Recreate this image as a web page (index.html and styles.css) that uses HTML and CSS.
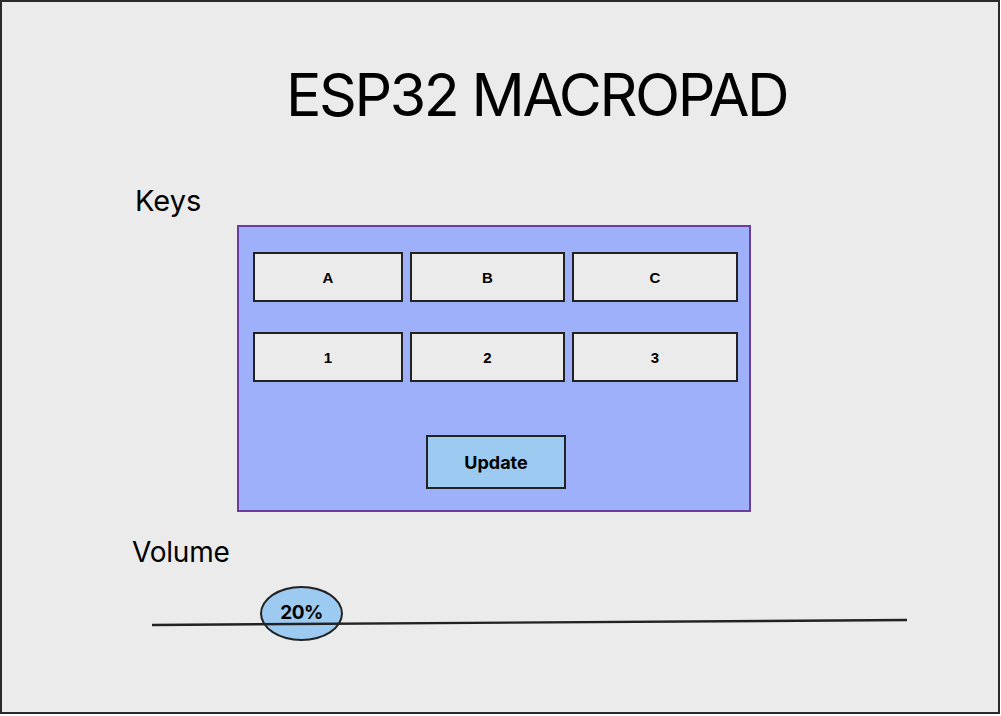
FILE: index.html
```html
<!DOCTYPE html>
<html>
<head>
<meta charset="utf-8">
<link rel="stylesheet" href="styles.css">
</head>
<body>
<div class="frame">
  <h1 class="title">ESP32 MACROPAD</h1>
  <div class="label keys-label">Keys</div>
  <div class="panel">
    <div class="keys">
      <div class="key">A</div>
      <div class="key">B</div>
      <div class="key">C</div>
      <div class="key">1</div>
      <div class="key">2</div>
      <div class="key">3</div>
    </div>
    <div class="actions">
      <div class="update">Update</div>
    </div>
  </div>
  <div class="label volume-label">Volume</div>
  <div class="slider">
    <div class="knob">20%</div>
    <svg class="track" width="1000" height="30" viewBox="0 0 1000 30">
      <line x1="152" y1="18" x2="907" y2="13" stroke="#222" stroke-width="2.4"/>
    </svg>
  </div>
</div>
</body>
</html>
```
FILE: styles.css
```css
html, body {
  margin: 0;
  padding: 0;
  background: #ffffff;
}
.frame {
  box-sizing: border-box;
  width: 1000px;
  height: 714px;
  border: 2px solid #2a2a2a;
  background: #ebebeb;
  font-family: Inter, "Liberation Sans", sans-serif;
  color: #000;
}
.title {
  margin: 63px 0 0 0;
  padding-left: 284px;
  font-family: Inter, "Liberation Sans", sans-serif;
  font-weight: 400;
  font-size: 59px;
  line-height: 60px;
  letter-spacing: -2.4px;
}
.label {
  font-size: 29px;
  line-height: 34px;
}
.keys-label {
  margin: 59px 0 0 133px;
}
.panel {
  box-sizing: border-box;
  margin: 7px 0 0 235px;
  width: 514px;
  height: 287px;
  border: 2px solid #6a3d9e;
  background: #9fb0fb;
  padding: 25px 0 0 14px;
}
.keys {
  display: grid;
  grid-template-columns: 150px 155px 166px;
  grid-auto-rows: 50px;
  column-gap: 7px;
  row-gap: 30px;
}
.key {
  box-sizing: border-box;
  border: 2px solid #222;
  background: #ebebeb;
  display: flex;
  align-items: center;
  justify-content: center;
  font-family: "Liberation Sans", Arial, sans-serif;
  font-weight: 700;
  font-size: 15px;
}
.actions {
  margin: 53px 0 0 173px;
}
.update {
  box-sizing: border-box;
  width: 140px;
  height: 54px;
  border: 2px solid #222;
  background: #9ccaf0;
  display: flex;
  align-items: center;
  justify-content: center;
  font-family: Inter, "Liberation Sans", sans-serif;
  font-weight: 700;
  font-size: 18px;
}
.volume-label {
  margin: 23px 0 0 130px;
  font-size: 28px;
  letter-spacing: -0.2px;
}
.slider {
  position: relative;
  height: 80px;
  margin-left: -2px;
}
.track {
  position: absolute;
  left: 0;
  top: 38px;
}
.knob {
  position: absolute;
  left: 260px;
  top: 17px;
  box-sizing: border-box;
  width: 83px;
  height: 55px;
  border: 2px solid #222;
  border-radius: 50%;
  background: #9ccaf0;
  display: flex;
  align-items: center;
  justify-content: center;
  padding-bottom: 2px;
  font-family: Inter, "Liberation Sans", sans-serif;
  font-weight: 700;
  font-size: 19px;
  letter-spacing: -0.6px;
}
```
